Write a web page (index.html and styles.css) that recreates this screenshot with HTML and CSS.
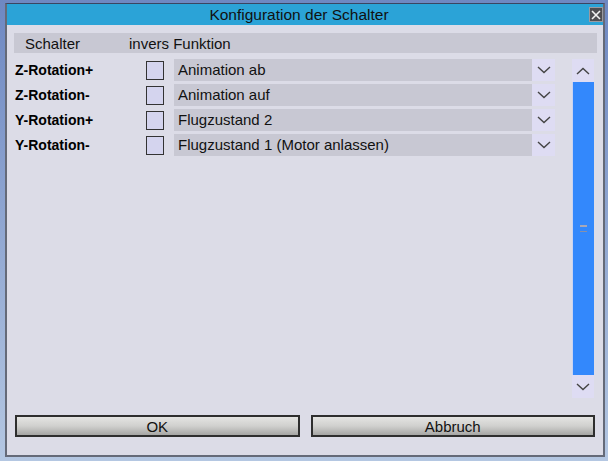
FILE: index.html
```html
<!DOCTYPE html>
<html lang="de">
<head>
  <meta charset="UTF-8">
  <title>Konfiguration der Schalter</title>
  <link rel="stylesheet" href="styles.css">
</head>
<body>

  <div class="dialog">
    <div class="titlebar">
      <span class="title">Konfiguration der Schalter</span>
      <span class="close">
        <svg width="10" height="10" viewBox="0 0 10 10"><path d="M1 1L9 9M9 1L1 9" stroke="#f2f2f2" stroke-width="1.6"/></svg>
      </span>
    </div>

    <div class="content">
      <div class="header">
        <span class="col-switch">Schalter</span>
        <span>invers Funktion</span>
      </div>

      <div class="main">
        <div class="rows">
          <div class="row">
            <span class="label">Z-Rotation+</span>
            <span class="check"></span>
            <div class="combo"><span class="combo-text">Animation ab</span><span class="combo-btn"><svg width="14" height="8" viewBox="0 0 14 8"><path d="M1 1L7 6.5L13 1" fill="none" stroke="#444" stroke-width="1.4"/></svg></span></div>
          </div>
          <div class="row">
            <span class="label">Z-Rotation-</span>
            <span class="check"></span>
            <div class="combo"><span class="combo-text">Animation auf</span><span class="combo-btn"><svg width="14" height="8" viewBox="0 0 14 8"><path d="M1 1L7 6.5L13 1" fill="none" stroke="#444" stroke-width="1.4"/></svg></span></div>
          </div>
          <div class="row">
            <span class="label">Y-Rotation+</span>
            <span class="check"></span>
            <div class="combo"><span class="combo-text">Flugzustand 2</span><span class="combo-btn"><svg width="14" height="8" viewBox="0 0 14 8"><path d="M1 1L7 6.5L13 1" fill="none" stroke="#444" stroke-width="1.4"/></svg></span></div>
          </div>
          <div class="row">
            <span class="label">Y-Rotation-</span>
            <span class="check"></span>
            <div class="combo"><span class="combo-text">Flugzustand 1 (Motor anlassen)</span><span class="combo-btn"><svg width="14" height="8" viewBox="0 0 14 8"><path d="M1 1L7 6.5L13 1" fill="none" stroke="#444" stroke-width="1.4"/></svg></span></div>
          </div>
        </div>

        <!-- Scrollleiste -->
        <div class="scrollbar">
          <span class="scroll-btn"><svg width="14" height="8" viewBox="0 0 14 8"><path d="M1 7L7 1.5L13 7" fill="none" stroke="#444" stroke-width="1.4"/></svg></span>
          <div class="thumb"><span class="grip"></span></div>
          <span class="scroll-btn"><svg width="14" height="8" viewBox="0 0 14 8"><path d="M1 1L7 6.5L13 1" fill="none" stroke="#444" stroke-width="1.4"/></svg></span>
        </div>
      </div>

      <div class="buttons">
        <button>OK</button>
        <button>Abbruch</button>
      </div>
    </div>
  </div>

</body>
</html>
```

FILE: styles.css
```css
body {
  margin: 0;
  height: 461px;
  overflow: hidden;
  font-family: "Liberation Sans", Arial, sans-serif;
  background: linear-gradient(180deg, #6e88c2, #b4c7e2);
}

.dialog {
  box-sizing: border-box;
  width: 600px;
  height: 454px;
  margin: 3px 0 0 5px;
  background: #dcdce7;
  border: 2px solid #656a78;
  border-top: 1px solid #3a4562;
  display: flex;
  flex-direction: column;
}

.titlebar {
  height: 21px;
  background: #2ba3d7;
  display: flex;
  align-items: center;
  justify-content: center;
  position: relative;
}

.title {
  font-size: 15.5px;
  color: #111;
  margin-left: -12px;
}

.close {
  position: absolute;
  right: 0;
  top: 3px;
  box-sizing: border-box;
  width: 14px;
  height: 15px;
  background: #4e4e52;
  border: 1px solid #9a9aa0;
  display: flex;
  align-items: center;
  justify-content: center;
}

.content {
  flex: 1;
  padding: 8px 6px 0 7px;
  display: flex;
  flex-direction: column;
}

.header {
  height: 20px;
  background: #c8c8d3;
  display: flex;
  align-items: center;
  padding-left: 11px;
  font-size: 15px;
  color: #111;
}

.col-switch {
  width: 104px;
}

.main {
  display: flex;
  margin-top: 6px;
  height: 339px;
}

.rows {
  flex: 1;
  display: flex;
  flex-direction: column;
  gap: 3px;
}

.row {
  display: flex;
  height: 22px;
  align-items: center;
}

.label {
  width: 131px;
  padding-left: 1px;
  font-size: 14px;
  font-weight: bold;
  color: #000;
}

.check {
  box-sizing: border-box;
  width: 18px;
  height: 19px;
  margin-right: 10px;
  background: #d4d4ee;
  border: 1px solid #333;
}

.combo {
  display: flex;
  height: 22px;
  width: 381px;
}

.combo-text {
  flex: 1;
  background: #c8c8d3;
  padding-left: 4px;
  font-size: 15px;
  color: #111;
  line-height: 22px;
}

.combo-btn {
  width: 23px;
  background: #dedcf3;
  display: flex;
  align-items: center;
  justify-content: center;
}

.scrollbar {
  width: 22px;
  margin: 0 3px 0 17px;
  display: flex;
  flex-direction: column;
}

.scroll-btn {
  height: 23px;
  background: #dedcf3;
  display: flex;
  align-items: center;
  justify-content: center;
}

.thumb {
  flex: 1;
  background: #3388fc;
  border-left: 1px solid #c9d3f2;
  display: flex;
  align-items: center;
  justify-content: center;
}

.grip {
  width: 7px;
  height: 4px;
  border-top: 2px solid #a8a8b8;
  border-bottom: 1px solid #8890a8;
}

.buttons {
  display: flex;
  gap: 11px;
  margin-top: 17px;
  padding: 0 2px 0 1px;
}

button {
  flex: 1;
  height: 22px;
  padding: 0;
  font-family: "Liberation Sans", Arial, sans-serif;
  font-size: 15px;
  color: #111;
  border: 2px solid #2e2e2e;
  background: linear-gradient(180deg, #e4e4e2, #d0d0ce 50%, #a6a6a4);
}
```
